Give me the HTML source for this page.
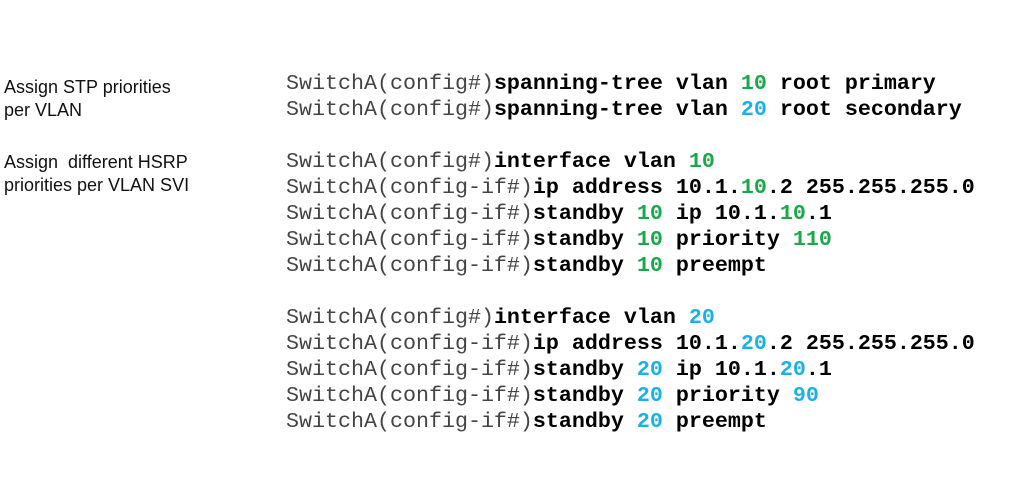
<!DOCTYPE html>
<html><head><style>
body{margin:0;width:1019px;height:497px;background:#fff;position:relative;overflow:hidden}
.l{position:absolute;left:4px;font:18px/23px "Liberation Sans",sans-serif;color:#111}
.c{position:absolute;left:286px;font:21.67px/26px "Liberation Mono",monospace;white-space:pre;color:#000}
.p{color:#444}
b{font-weight:bold}
.g{color:#1aa84a;font-weight:bold}
.bl{color:#1ab0e8;font-weight:bold}
</style></head><body>
<div class="l" style="top:76px">Assign STP priorities<br>per VLAN</div>
<div class="l" style="top:151px">Assign&nbsp; different HSRP<br>priorities per VLAN SVI</div>
<div class="c" style="top:71px"><span class="p">SwitchA(config#)</span><b>spanning-tree vlan </b><span class="g">10</span><b> root primary</b>
<span class="p">SwitchA(config#)</span><b>spanning-tree vlan </b><span class="bl">20</span><b> root secondary</b></div>
<div class="c" style="top:149px"><span class="p">SwitchA(config#)</span><b>interface vlan </b><span class="g">10</span>
<span class="p">SwitchA(config-if#)</span><b>ip address 10.1.</b><span class="g">10</span><b>.2 255.255.255.0</b>
<span class="p">SwitchA(config-if#)</span><b>standby </b><span class="g">10</span><b> ip 10.1.</b><span class="g">10</span><b>.1</b>
<span class="p">SwitchA(config-if#)</span><b>standby </b><span class="g">10</span><b> priority </b><span class="g">110</span>
<span class="p">SwitchA(config-if#)</span><b>standby </b><span class="g">10</span><b> preempt</b>

<span class="p">SwitchA(config#)</span><b>interface vlan </b><span class="bl">20</span>
<span class="p">SwitchA(config-if#)</span><b>ip address 10.1.</b><span class="bl">20</span><b>.2 255.255.255.0</b>
<span class="p">SwitchA(config-if#)</span><b>standby </b><span class="bl">20</span><b> ip 10.1.</b><span class="bl">20</span><b>.1</b>
<span class="p">SwitchA(config-if#)</span><b>standby </b><span class="bl">20</span><b> priority </b><span class="bl">90</span>
<span class="p">SwitchA(config-if#)</span><b>standby </b><span class="bl">20</span><b> preempt</b></div>
</body></html>
